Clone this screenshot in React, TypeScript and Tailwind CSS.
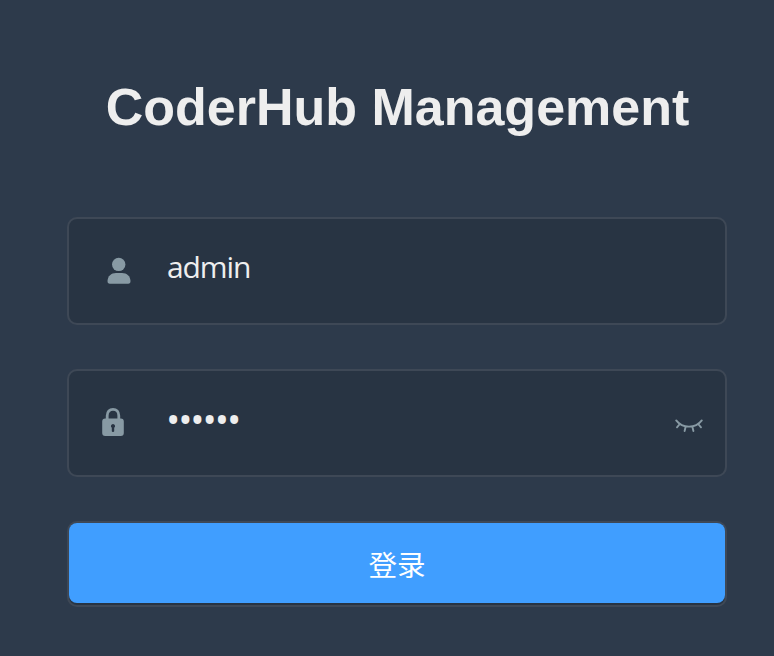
import React from 'react';

function UserIcon() {
  return (
    <svg className="ml-[38px] h-7 w-6 shrink-0" viewBox="0 0 24 28" fill="currentColor">
      <circle cx="11.7" cy="7.4" r="6.7" />
      <path d="M9 15.900h6c4.900 0 8.300 3.100 8.500 8.200 0 1.900-.7 2.700-2.300 2.700H2.800C1.200 26.800.5 26 .5 24.100.7 19 4.100 15.900 9 15.900z" />
    </svg>
  );
}

function LockIcon() {
  return (
    <svg className="mb-0.5 ml-8 h-[30px] w-6 shrink-0" viewBox="0 0 24 30" fill="currentColor">
      <path d="M6.200 12V8.700C6.200 4.800 8.600 2.300 12 2.300s5.800 2.500 5.800 6.400V12" fill="none" stroke="currentColor" strokeWidth="2.800" />
      <path
        fillRule="evenodd"
        d="M4.200 11.600h15.600a3 3 0 0 1 3 3v11.500a3 3 0 0 1-3 3H4.200a3 3 0 0 1-3-3V14.600a3 3 0 0 1 3-3zM12 17a2.100 2.100 0 0 0-1.200 3.800v3.400q0 .8 1.200.8t1.200-.8v-3.400A2.100 2.100 0 0 0 12 17z"
      />
    </svg>
  );
}

function ClosedEyeIcon() {
  return (
    <svg className="h-4 w-[30px]" viewBox="0 0 30 16" fill="none" stroke="currentColor" strokeWidth="1.900" strokeLinecap="round">
      <path d="M2.200 2.400C8.500 10.700 21.500 10.700 27.800 2.400M5.800 6 3 9.300M24.200 6 27 9.300M11.600 8.800l-1 4.200M18.400 8.800l1 4.200" />
    </svg>
  );
}

export default function App() {
  return (
    <div className="h-[656px] w-full bg-[#2d3a4b] pr-[47px] pl-[67px] pt-[77px] font-['Open_Sans','Noto_Sans_CJK_SC',sans-serif]">
      <h1 className="mb-20 pl-px text-center font-['Liberation_Sans',sans-serif] text-[52px] leading-[60px] font-bold whitespace-nowrap text-[#eee]">
        CoderHub Management
      </h1>
      <form>
        <div className="mb-11 flex h-[108px] items-center rounded-[10px] border-2 border-white/10 bg-[#283443] text-[#889aa4]">
          <UserIcon />
          <input
            type="text"
            readOnly
            value="admin"
            className="mb-2.5 ml-9 h-[60px] w-[480px] bg-transparent text-[30px] tracking-[-1.1px] text-[#eee] outline-none"
          />
        </div>
        <div className="mb-11 flex h-[108px] items-center rounded-[10px] border-2 border-white/10 bg-[#283443] text-[#889aa4]">
          <LockIcon />
          <input
            type="password"
            readOnly
            value="123456"
            className="mb-2 ml-[41px] h-[60px] w-[480px] bg-transparent text-[38px] tracking-[-2.100px] text-[#eee] outline-none"
          />
          <span className="mt-1.5 mr-[21px] ml-auto">
            <ClosedEyeIcon />
          </span>
        </div>
        <div className="h-[86px] rounded-[10px] border-2 border-white/10 bg-[#283443]">
          <button
            type="button"
            className="flex h-20 w-full items-center justify-center rounded-lg bg-[#409eff] pt-0.5 font-['Noto_Sans_CJK_SC',sans-serif] text-[28.5px] text-white"
          >
            登录
          </button>
        </div>
      </form>
    </div>
  );
}
